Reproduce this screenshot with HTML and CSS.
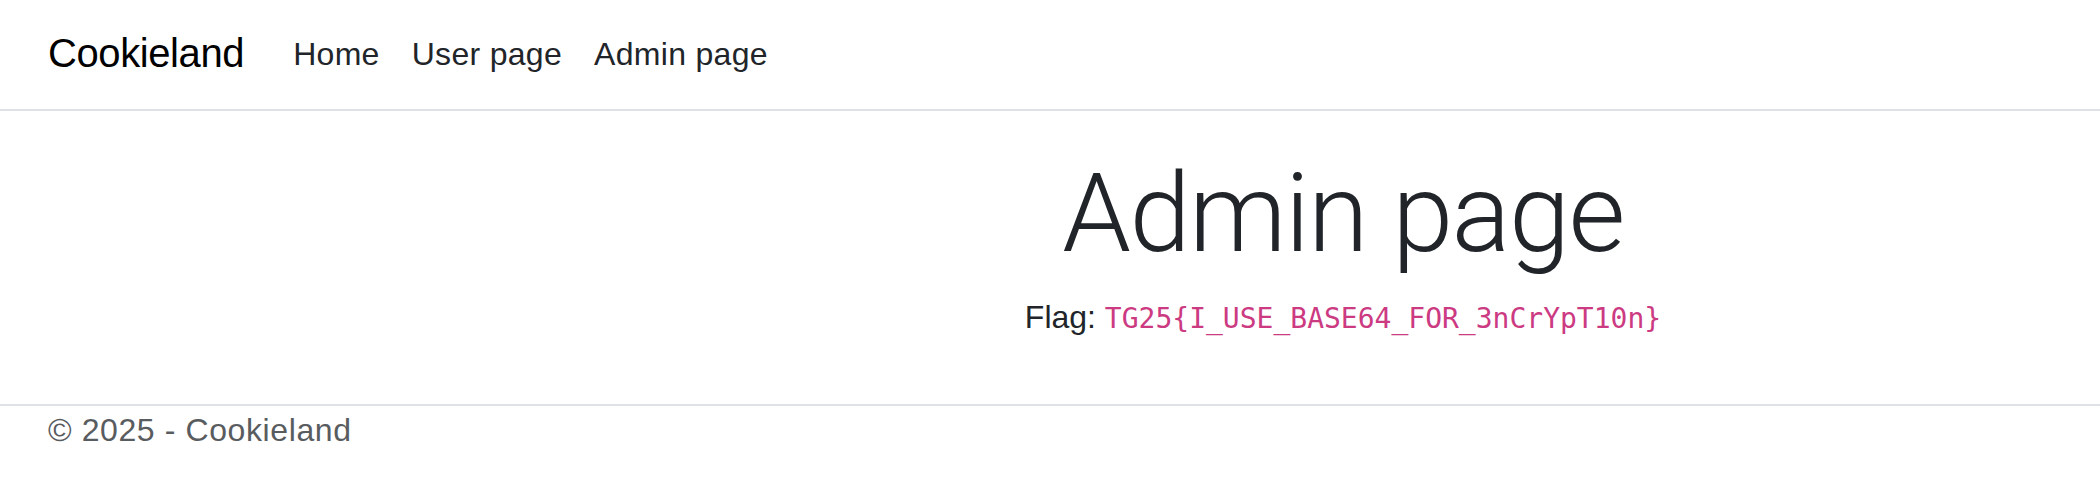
FILE: index.html
```html
<!DOCTYPE html>
<html lang="en">
<head>
<meta charset="utf-8">
<title>Admin page - Cookieland</title>
<link rel="stylesheet" href="styles.css">
</head>
<body>
<header class="site-header">
  <nav class="navbar">
    <a class="brand" href="#">Cookieland</a>
    <ul class="nav-links">
      <li><a class="nav-link" href="#">Home</a></li>
      <li><a class="nav-link" href="#">User page</a></li>
      <li><a class="nav-link" href="#">Admin page</a></li>
    </ul>
  </nav>
</header>
<main class="main">
  <div class="spacer"></div>
  <section class="content">
    <h1 class="title">Admin page</h1>
    <p class="flag">Flag: <code class="flag-code">TG25{I_USE_BASE64_FOR_3nCrYpT10n}</code></p>
  </section>
</main>
<footer class="site-footer">
  <div class="footer-inner">&copy; 2025 - Cookieland</div>
</footer>
</body>
</html>
```

FILE: styles.css
```css
* { box-sizing: border-box; }
html, body { margin: 0; padding: 0; background: #fff; }
body {
  font-family: "Liberation Sans", Arial, sans-serif;
  color: #212529;
  font-size: 32px;
  line-height: 48px;
}
a { text-decoration: none; }

.site-header {
  border-bottom: 2px solid #dee2e6;
}
.navbar {
  height: 109px;
  display: flex;
  align-items: center;
  padding: 0 48px;
}
.brand {
  font-size: 40px;
  line-height: 60px;
  letter-spacing: -0.4px;
  color: #000;
  margin-right: 33px;
  margin-bottom: 3px;
}
.nav-links {
  list-style: none;
  margin: 0;
  padding: 0;
  display: flex;
  margin-bottom: 2px;
}
.nav-link {
  display: block;
  padding: 0 16px;
  font-size: 32px;
  line-height: 48px;
  letter-spacing: 0.3px;
  color: #212529;
}

.main {
  display: grid;
  grid-template-columns: 586px 1fr;
  padding-top: 37px;
  padding-bottom: 61px;
}
.content {
  text-align: center;
}
.title {
  margin: 0;
  font-family: Roboto, "Liberation Sans", sans-serif;
  font-weight: 300;
  font-size: 110px;
  line-height: 132px;
  letter-spacing: -1.6px;
  color: #212529;
}
.flag {
  margin: 13px 0 0;
  font-size: 32px;
  line-height: 48px;
}
.flag-code {
  font-family: "DejaVu Sans Mono", "Liberation Mono", monospace;
  font-size: 28px;
  color: #cc3a82;
}

.site-footer {
  border-top: 2px solid #dee2e6;
  padding: 0 48px;
}
.footer-inner {
  color: #595c5f;
  font-size: 32px;
  line-height: 48px;
  letter-spacing: 0.6px;
}
```
